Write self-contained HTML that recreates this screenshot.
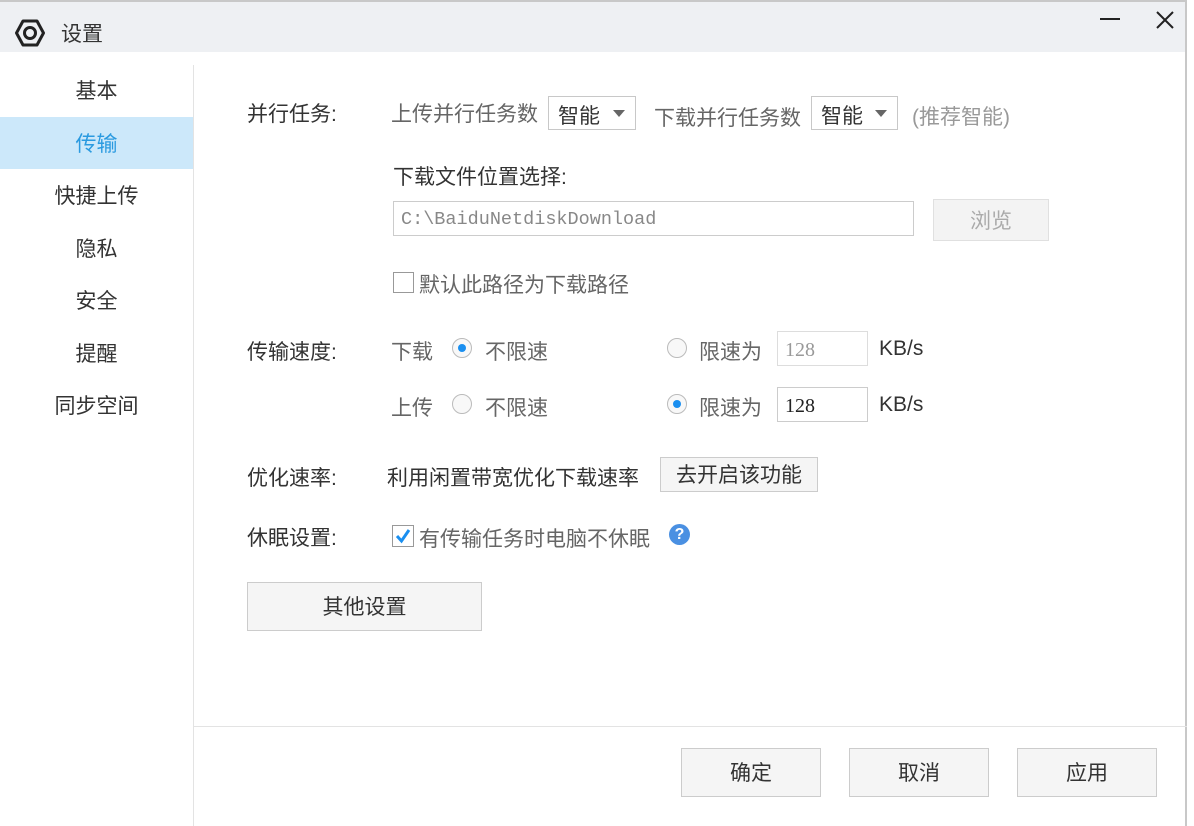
<!DOCTYPE html><html><head><meta charset="utf-8"><style>
*{margin:0;padding:0;box-sizing:border-box}
body{width:1194px;height:826px;background:#fff;font-family:"Liberation Sans","Noto Sans CJK SC",sans-serif;font-size:21px;color:#333;position:relative;overflow:hidden}
.a{position:absolute;white-space:nowrap}
.t{margin-top:1px}
.win{position:absolute;left:0;top:0;width:1187px;height:826px;border-right:2px solid #c8c8c8;background:#fff}
.title{position:absolute;left:0;top:0;width:1185px;height:52px;background:#eef0f3;border-top:2px solid #c8c8c8}
.nav{position:absolute;left:0;width:193px;text-align:center;height:52px;line-height:56px}
.sel{background:#cce8fa;color:#2a9ae0}
.btn{position:absolute;border:1px solid #ccc;background:#f5f5f5;text-align:center;color:#333}
.sel2{position:absolute;border:1px solid #c8c8c8;background:#fff;height:34px;line-height:32px;padding-top:4px;padding-left:9px}
.sel2:after{content:"";position:absolute;right:10px;top:13px;border-left:6px solid transparent;border-right:6px solid transparent;border-top:7px solid #666}
.radio{position:absolute;width:20px;height:20px;border:1px solid #bbb;border-radius:50%;background:#f8f8f8}
.radio.on:after{content:"";position:absolute;left:5px;top:5px;width:8px;height:8px;border-radius:50%;background:#1a8ff0}
.inp{position:absolute;border:1px solid #ccc;height:35px;line-height:36px;padding-left:7px;font-family:"Liberation Serif",serif;font-size:20px}
.g{color:#666}
</style></head><body>
<div class="win">
<div class="title"></div>
<svg class="a" style="left:15px;top:18px" width="30" height="30" viewBox="0 0 30 30"><polygon points="8,3 22,3 28.5,15 22,27 8,27 1.5,15" fill="none" stroke="#222" stroke-width="3" stroke-linejoin="round"/><circle cx="15" cy="15" r="5.5" fill="none" stroke="#222" stroke-width="3"/></svg>
<div class="a" style="left:61px;top:18px;font-size:21px">设置</div>
<div class="a" style="left:1100px;top:18px;width:20px;height:2px;background:#222"></div>
<svg class="a" style="left:1155px;top:10px" width="20" height="20"><path d="M2 2L18 18M18 2L2 18" stroke="#222" stroke-width="2"/></svg>
<div class="a" style="left:193px;top:65px;width:1px;height:761px;background:#e3e3e3"></div>
<div class="nav" style="top:64px">基本</div>
<div class="nav sel" style="top:117px">传输</div>
<div class="nav" style="top:169px">快捷上传</div>
<div class="nav" style="top:222px">隐私</div>
<div class="nav" style="top:274px">安全</div>
<div class="nav" style="top:327px">提醒</div>
<div class="nav" style="top:379px">同步空间</div>

<div class="a t" style="left:247px;top:97px">并行任务:</div>
<div class="a g t" style="left:391px;top:97px">上传并行任务数</div>
<div class="sel2" style="left:548px;top:96px;width:88px">智能</div>
<div class="a g t" style="left:654px;top:101px">下载并行任务数</div>
<div class="sel2" style="left:811px;top:96px;width:87px">智能</div>
<div class="a t" style="left:912px;top:100px;color:#999">(推荐智能)</div>

<div class="a t" style="left:393px;top:160px">下载文件位置选择:</div>
<div class="inp" style="left:393px;top:201px;width:521px;color:#888;font-family:'Liberation Mono',monospace;font-size:18.5px">C:\BaiduNetdiskDownload</div>
<div class="btn" style="left:933px;top:199px;width:116px;height:42px;line-height:44px;color:#aaa;border-color:#e0e0e0;background:#f3f3f3">浏览</div>
<div class="a" style="left:393px;top:272px;width:21px;height:21px;border:1px solid #999;background:#fff"></div>
<div class="a g t" style="left:419px;top:268px">默认此路径为下载路径</div>

<div class="a t" style="left:247px;top:335px">传输速度:</div>
<div class="a g t" style="left:391px;top:335px">下载</div>
<div class="radio on" style="left:452px;top:338px"></div>
<div class="a g t" style="left:485px;top:335px">不限速</div>
<div class="radio" style="left:667px;top:338px"></div>
<div class="a g t" style="left:699px;top:335px">限速为</div>
<div class="inp" style="left:777px;top:331px;width:91px;color:#999;border-color:#ddd">128</div>
<div class="a t" style="left:879px;top:336px">KB/s</div>
<div class="a g t" style="left:391px;top:391px">上传</div>
<div class="radio" style="left:452px;top:394px"></div>
<div class="a g t" style="left:485px;top:391px">不限速</div>
<div class="radio on" style="left:667px;top:394px"></div>
<div class="a g t" style="left:699px;top:391px">限速为</div>
<div class="inp" style="left:777px;top:387px;width:91px;color:#222">128</div>
<div class="a t" style="left:879px;top:392px">KB/s</div>

<div class="a t" style="left:247px;top:461px">优化速率:</div>
<div class="a t" style="left:387px;top:461px">利用闲置带宽优化下载速率</div>
<div class="btn" style="left:660px;top:457px;width:158px;height:35px;line-height:35px">去开启该功能</div>

<div class="a t" style="left:247px;top:521px">休眠设置:</div>
<div class="a" style="left:392px;top:525px;width:22px;height:22px;border:1px solid #999;background:#fff"></div>
<svg class="a" style="left:394px;top:527px" width="18" height="18"><path d="M3 9L7.5 14L15 3" fill="none" stroke="#1a8ff0" stroke-width="3"/></svg>
<div class="a g t" style="left:419px;top:522px">有传输任务时电脑不休眠</div>
<div class="a" style="left:669px;top:524px;width:21px;height:21px;border-radius:50%;background:#4a90e2;color:#fff;font-size:16px;font-weight:bold;text-align:center;line-height:21px">?</div>

<div class="btn" style="left:247px;top:582px;width:235px;height:49px;line-height:49px">其他设置</div>

<div class="a" style="left:193px;top:726px;width:994px;height:1px;background:#e3e3e3"></div>
<div class="btn" style="left:681px;top:748px;width:140px;height:49px;line-height:49px">确定</div>
<div class="btn" style="left:849px;top:748px;width:140px;height:49px;line-height:49px">取消</div>
<div class="btn" style="left:1017px;top:748px;width:140px;height:49px;line-height:49px">应用</div>
</div>
</body></html>
